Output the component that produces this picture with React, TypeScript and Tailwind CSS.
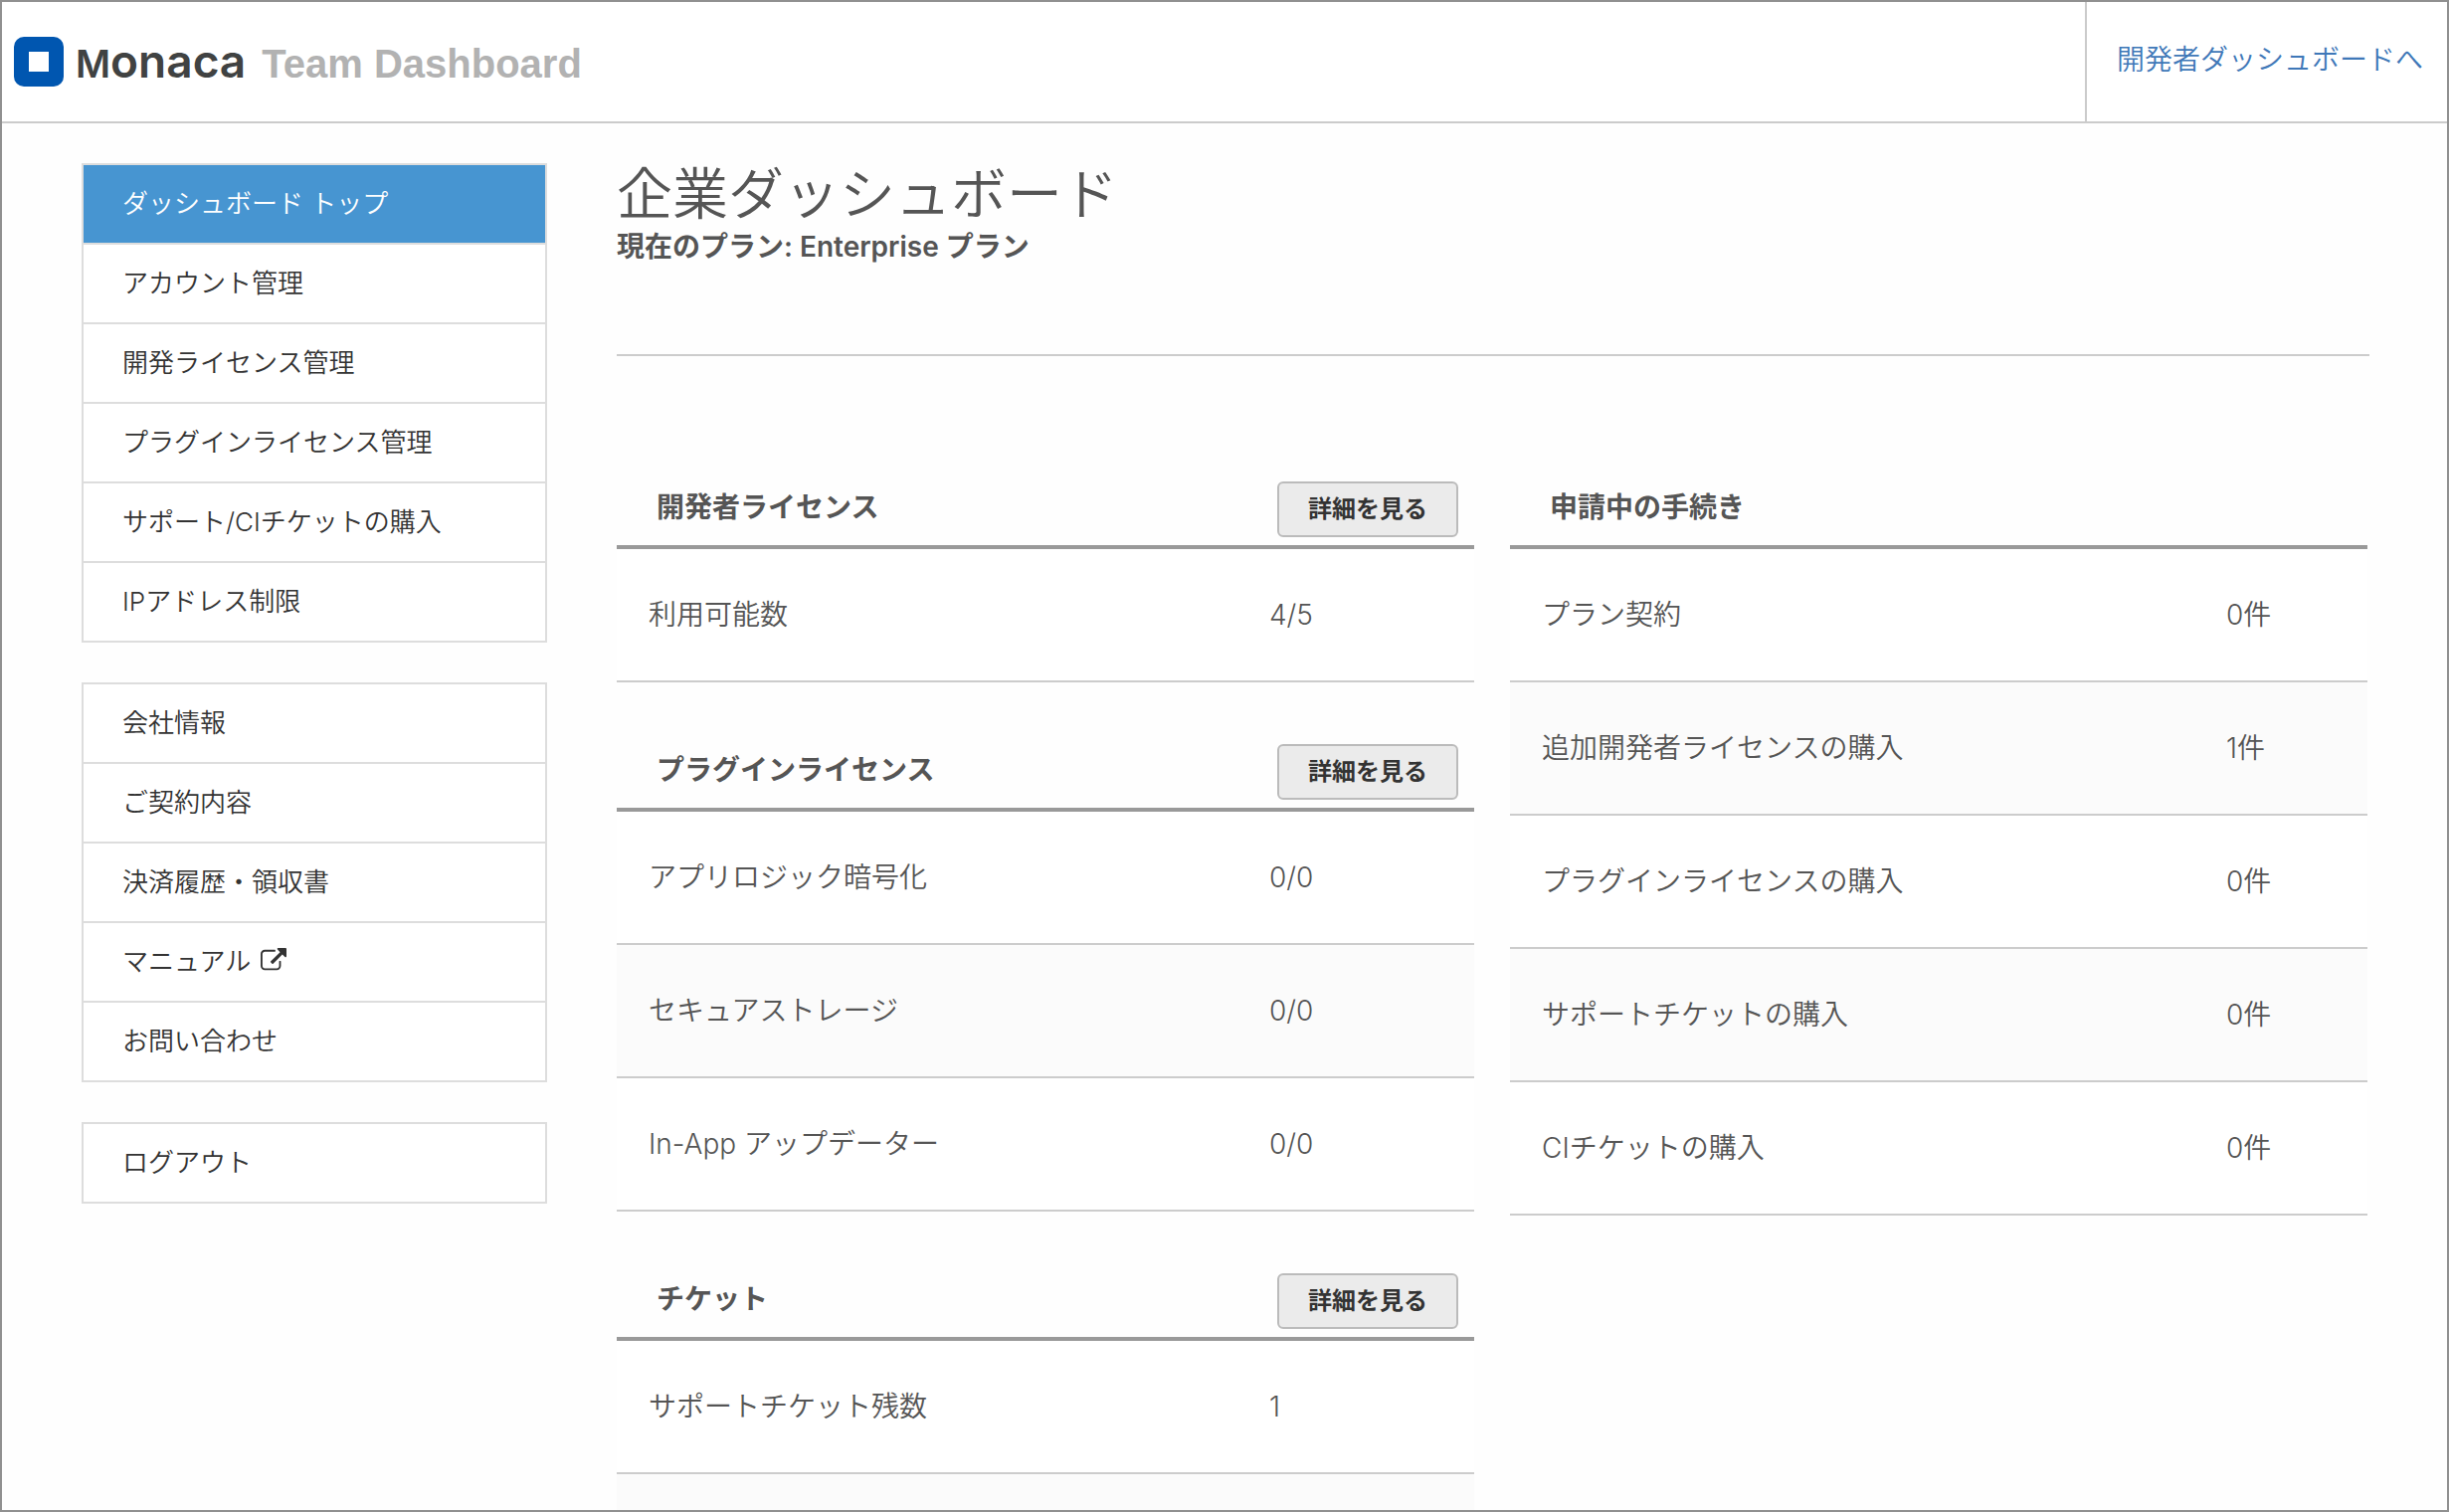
import type { ReactNode } from "react";

type NavItem = { label: string; active?: boolean; external?: boolean };
type Row = { label: string; value: string };

const navGroups: NavItem[][] = [
  [
    { label: "ダッシュボード トップ", active: true },
    { label: "アカウント管理" },
    { label: "開発ライセンス管理" },
    { label: "プラグインライセンス管理" },
    { label: "サポート/CIチケットの購入" },
    { label: "IPアドレス制限" },
  ],
  [
    { label: "会社情報" },
    { label: "ご契約内容" },
    { label: "決済履歴・領収書" },
    { label: "マニュアル", external: true },
    { label: "お問い合わせ" },
  ],
  [{ label: "ログアウト" }],
];

const licenseSections: { title: string; rows: Row[] }[] = [
  { title: "開発者ライセンス", rows: [{ label: "利用可能数", value: "4/5" }] },
  {
    title: "プラグインライセンス",
    rows: [
      { label: "アプリロジック暗号化", value: "0/0" },
      { label: "セキュアストレージ", value: "0/0" },
      { label: "In-App アップデーター", value: "0/0" },
    ],
  },
  {
    title: "チケット",
    rows: [
      { label: "サポートチケット残数", value: "1" },
      { label: "", value: "" },
    ],
  },
];

const requests: Row[] = [
  { label: "プラン契約", value: "0件" },
  { label: "追加開発者ライセンスの購入", value: "1件" },
  { label: "プラグインライセンスの購入", value: "0件" },
  { label: "サポートチケットの購入", value: "0件" },
  { label: "CIチケットの購入", value: "0件" },
];

function LogoMark() {
  return (
    <svg viewBox="0 0 50 50" className="size-[50px]" aria-hidden="true">
      <rect width="50" height="50" rx="10" fill="#0056b0" />
      <rect x="15" y="15" width="20" height="20" fill="#fff" />
    </svg>
  );
}

function ExternalIcon() {
  return (
    <svg viewBox="0 0 1792 1792" className="size-[26px]" fill="currentColor" aria-hidden="true">
      <path d="M1408 928v320q0 119-84.5 203.5t-203.5 84.5h-832q-119 0-203.5-84.5t-84.5-203.5v-832q0-119 84.5-203.5t203.5-84.5h704q14 0 23 9t9 23v64q0 14-9 23t-23 9h-704q-66 0-113 47t-47 113v832q0 66 47 113t113 47h832q66 0 113-47t47-113v-320q0-14 9-23t23-9h64q14 0 23 9t9 23zm384-864v512q0 26-19 45t-45 19-45-19l-176-176-652 652q-10 10-23 10t-23-10l-114-114q-10-10-10-23t10-23l652-652-176-176q-19-19-19-45t19-45 45-19h512q26 0 45 19t19 45z" />
    </svg>
  );
}

function Header() {
  return (
    <header className="flex h-[122px] shrink-0 items-stretch justify-between border-b-2 border-[#cbcbcb] bg-white">
      <a href="#top" className="flex items-center pl-3">
        <LogoMark />
        <span className="ml-3 flex items-baseline pb-0.5 leading-none text-[#404242]">
          <span className="font-semibold">
            <span className="text-[38px]">M</span>
            <span className="text-[46px]">onaca</span>
          </span>
          <span className="ml-4 font-['Liberation_Sans',sans-serif] text-[40px] font-bold text-[#b2b2b2]">
            Team Dashboard
          </span>
        </span>
      </a>
      <a
        href="#developer"
        className="flex items-center border-l-2 border-[#cbcbcb] pr-6 pb-1 pl-[30px] text-[28px] text-[#3f78b8]"
      >
        開発者ダッシュボードへ
      </a>
    </header>
  );
}

function Sidebar() {
  return (
    <nav className="flex w-[468px] shrink-0 flex-col gap-10">
      {navGroups.map((group, i) => (
        <ul key={i} className="divide-y-2 divide-[#dddddd] border-2 border-[#dddddd] bg-white">
          {group.map((item) => (
            <li key={item.label}>
              <a
                href="#menu"
                aria-current={item.active ? "page" : undefined}
                className={
                  item.active
                    ? "flex h-[78px] items-center bg-[#4795d1] pb-0.5 pl-[39px] text-[26px] text-white"
                    : "flex h-[78px] items-center gap-2.5 pb-0.5 pl-[39px] text-[26px] text-[#333333]"
                }
              >
                {item.label}
                {item.external && <ExternalIcon />}
              </a>
            </li>
          ))}
        </ul>
      ))}
    </nav>
  );
}

function Section({
  title,
  rows,
  valueClass,
  action,
}: {
  title: string;
  rows: Row[];
  valueClass: string;
  action?: ReactNode;
}) {
  return (
    <section>
      <div className="flex h-[68px] items-start justify-between border-b-4 border-[#999999] pr-4 pl-10">
        <h2 className="text-[28px] leading-[52px] font-semibold">{title}</h2>
        {action}
      </div>
      <table className="w-full table-fixed border-separate border-spacing-0 text-left text-[28px]">
        <tbody>
          {rows.map((row, i) => (
            <tr key={i} className="h-[134px] bg-white even:bg-[#fbfbfb]">
              <th scope="row" className="border-b-2 border-[#cccccc] pl-8 font-[350]">
                {row.label}
              </th>
              <td className={valueClass}>{row.value}</td>
            </tr>
          ))}
        </tbody>
      </table>
    </section>
  );
}

function DetailButton() {
  return (
    <button
      type="button"
      className="h-14 w-[182px] rounded-md border-2 border-[#bbbbbb] bg-[#ebebeb] text-[24px] font-semibold text-[#333333]"
    >
      詳細を見る
    </button>
  );
}

export default function App() {
  return (
    <div className="flex h-screen flex-col overflow-hidden border-2 border-[#909090] bg-[#fefefe] font-['Inter','Noto_Sans_CJK_JP',sans-serif] font-[350] text-[#555555]">
      <Header />
      <div className="flex gap-[70px] overflow-hidden pt-10 pr-[78px] pl-20">
        <Sidebar />
        <main className="min-w-0 flex-1">
          <h1 className="text-[56px] leading-[62px]">企業ダッシュボード</h1>
          <p className="text-[28px] leading-[44px] font-semibold">現在のプラン: Enterprise プラン</p>
          <hr className="mt-[86px] border-t-2 border-[#cccccc]" />
          <div className="mt-[126px] grid grid-cols-2 items-start gap-9 pr-0.5">
            <div className="flex flex-col gap-[62px]">
              {licenseSections.map((s) => (
                <Section
                  key={s.title}
                  title={s.title}
                  rows={s.rows}
                  valueClass="w-[206px] border-b-2 border-[#cccccc]"
                  action={<DetailButton />}
                />
              ))}
            </div>
            <Section
              title="申請中の手続き"
              rows={requests}
              valueClass="w-[142px] border-b-2 border-[#cccccc]"
            />
          </div>
        </main>
      </div>
    </div>
  );
}
